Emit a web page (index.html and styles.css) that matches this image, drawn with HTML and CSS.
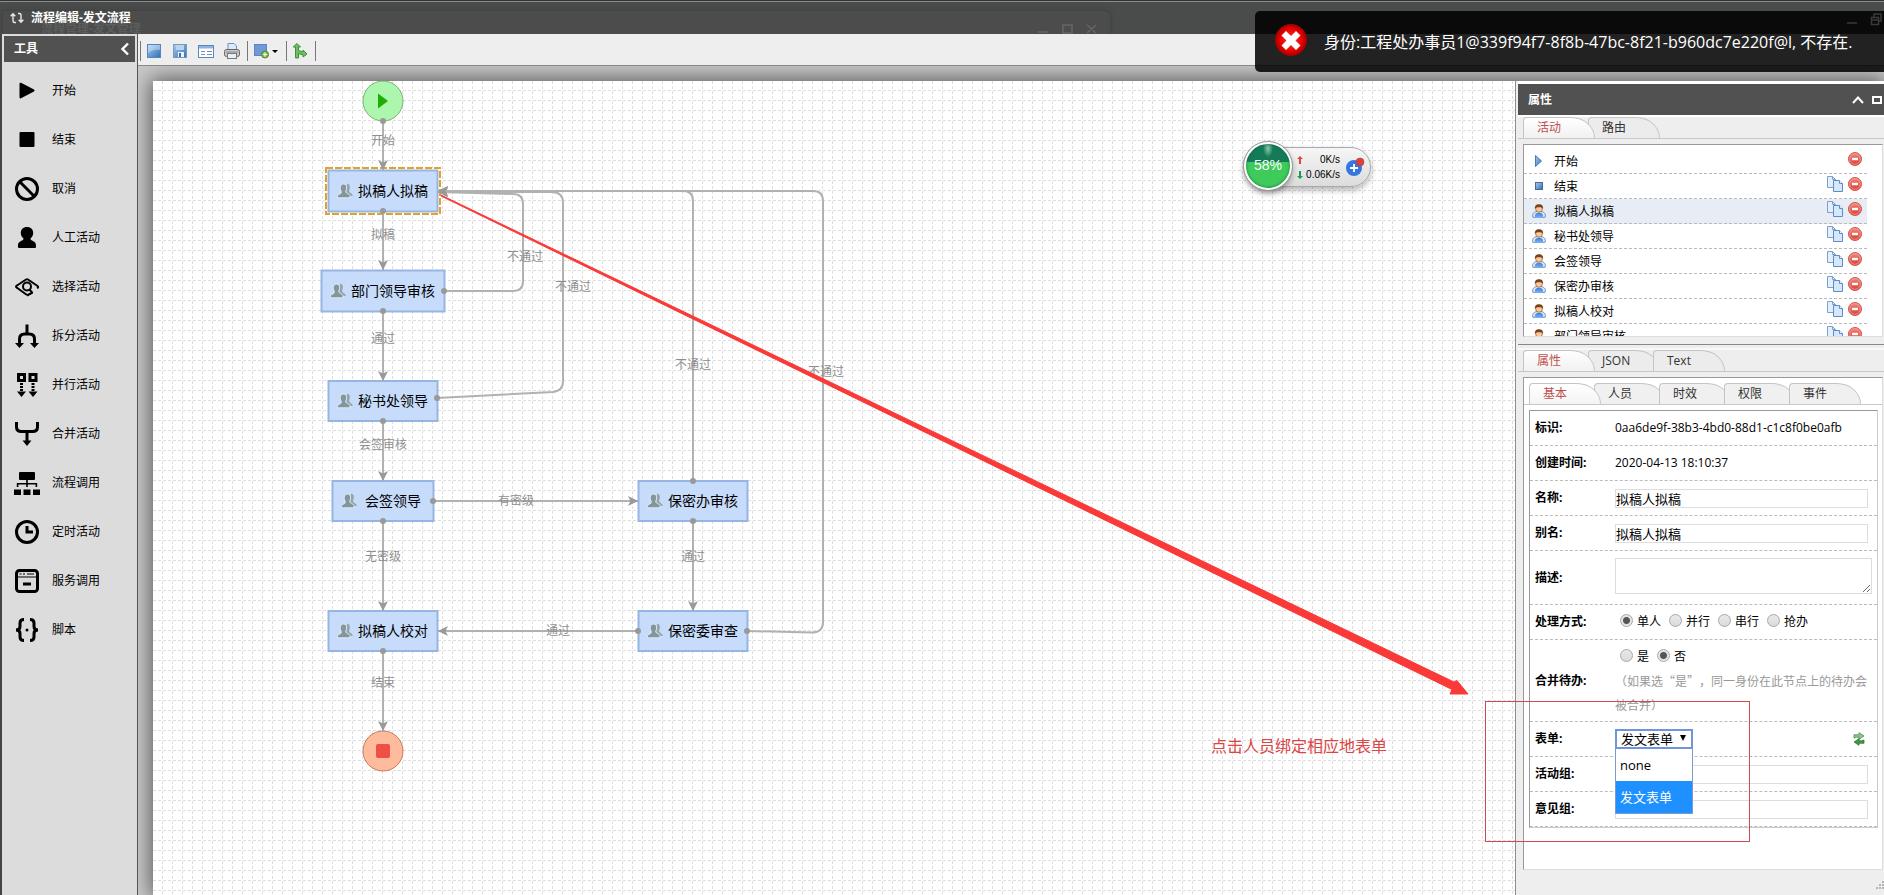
FILE: index.html
```
<!DOCTYPE html>
<html lang="zh-CN">
<head>
<meta charset="utf-8">
<title>流程编辑-发文流程</title>
<link rel="stylesheet" href="styles.css">
</head>
<body>
<svg class="sprite" aria-hidden="true">
  <defs>
    <linearGradient id="gBlue" x1="0" y1="0" x2="1" y2="1"><stop offset="0" stop-color="#a9cdf2"/><stop offset="1" stop-color="#2f6fb5"/></linearGradient>
    <linearGradient id="gRed" x1="0" y1="0" x2="0" y2="1"><stop offset="0" stop-color="#f08a80"/><stop offset="1" stop-color="#d93a32"/></linearGradient>
    <linearGradient id="gUser" x1="0" y1="0" x2="0" y2="1"><stop offset="0" stop-color="#3f7fd6"/><stop offset="1" stop-color="#6fb4ff"/></linearGradient>
    <radialGradient id="gErr"><stop offset="0" stop-color="#ff3a30"/><stop offset="0.7" stop-color="#e80000"/><stop offset="1" stop-color="#a00000"/></radialGradient>
  </defs>
  <symbol id="i-copy" viewBox="0 0 16 16"><path d="M.5.5h5l3 3v8h-8z" fill="#e3effc" stroke="#7aa0cf"/><path d="M5.5.5v3h3" fill="none" stroke="#7aa0cf"/><path d="M6.500 4.500h6l3 3v8h-9z" fill="#d5e7fb" stroke="#5f8cc4"/><path d="M12.500 4.500v3h3" fill="#fff" stroke="#5f8cc4"/></symbol>
  <symbol id="i-del" viewBox="0 0 14 14"><circle cx="7" cy="7" r="6.500" fill="url(#gRed)" stroke="#d0554d"/><circle cx="7" cy="7" r="5.300" fill="none" stroke="#f5aaa4" stroke-width=".7"/><rect x="4" y="5.800" width="6" height="2.400" fill="#fff"/></symbol>
  <symbol id="i-user" viewBox="0 0 14 14"><path d="M.8 13.200C0 9.500 2 8 5 7.500h4c3 .5 5 2 4.200 5.700-3 .8-9.400.8-12.400 0z" fill="#dfe8f2" stroke="#5d7fae" stroke-width=".8"/><path d="M3 13.300c-.6-3 1-4.600 4-4.600s4.600 1.600 4 4.600c-2 .5-6 .5-8 0z" fill="url(#gUser)"/><circle cx="7" cy="4.800" r="3.400" fill="#f7c9a0" stroke="#a8622c" stroke-width=".8"/><path d="M2.900 5C2.500 1.500 4.500.3 7 .3s4.500 1.200 4.100 4.700C10 3.200 8.500 3.300 7 3.300S4 3.200 2.900 5z" fill="#7a4218"/></symbol>
  <symbol id="i-group" viewBox="0 0 16 16"><path d="M10 .8c2.200 0 3.200 1.700 2.800 4.200-.2 1.600-.9 2.500-.7 3.600.3 1.300 3.400 1.700 3.700 4.400H9z" fill="#93a5aa"/><path d="M6.500 1c2.400 0 3.400 1.800 3.100 4.200-.2 1.700-.9 2.600-.9 3.600 0 1.500 3.600 1.700 4.300 3.700v2.300H.4v-2.100c1.200-1.600 4-2 4-3.500 0-1-1-2-1.200-3.600C2.900 3.100 4.300 1 6.500 1z" fill="#84969c" stroke="#eef5fc" stroke-width=".8"/></symbol>
</svg>

<header class="titlebar">
  <svg class="titlebar-icon" viewBox="0 0 14 12" width="14" height="12" aria-hidden="true"><path d="M6 10.500H4.500q-1.500 0-1.500-1.500V2M.7 4.300 3 1.700l2.300 2.600M8 1.500h1.500q1.500 0 1.500 1.500v7M8.700 7.700 11 10.300l2.300-2.600" fill="none" stroke="#e8e8e8" stroke-width="1.400"/></svg>
  <h1 class="titlebar-text">流程编辑-发文流程</h1>
  <div class="ghost-window" aria-hidden="true">
    <span class="ghost-text">流程管理-发文管理</span>
    <svg viewBox="0 0 60 12" width="60" height="12"><path d="M0 9h10M25 2h9v8h-9zM49 2l9 8M58 2l-9 8" fill="none" stroke="#656666" stroke-width="1.500"/></svg>
  </div>
</header>

<div class="layout">
  <aside class="tools">
    <div class="tools-head"><h2 class="head-text">工具</h2>
      <button class="icon-btn" aria-label="收起"><svg viewBox="0 0 10 14" width="10" height="14"><path d="M8 1.500 2.500 7 8 12.500" fill="none" stroke="#fff" stroke-width="2.400"/></svg></button>
    </div>
    <ul class="tool-list">
      <li class="tool"><svg class="tool-icon" viewBox="0 0 24 24"><path d="M4.500 5q0-1.800 1.500-1.200L19 10.500q1.200 1 0 2L6 19.200Q4.500 20 4.500 18z"/></svg>开始</li>
      <li class="tool"><svg class="tool-icon" viewBox="0 0 24 24"><rect x="4.500" y="4" width="15" height="15" rx="1"/></svg>结束</li>
      <li class="tool"><svg class="tool-icon line" viewBox="0 0 24 24"><circle cx="12" cy="12" r="10.500"/><path d="M4.800 4.800 19.200 19.200"/></svg>取消</li>
      <li class="tool"><svg class="tool-icon" viewBox="0 0 24 24"><path d="M12 1c4 0 6.200 2.600 6.200 6 0 2.300-1 4-2.500 5.300-.8 1 .3 1.700 1.800 2.500 2.500 1.200 3.700 2.200 3.500 6.500q0 .7-1 .7H4q-1 0-1-.7c-.2-4.300 1-5.300 3.500-6.500 1.500-.8 2.600-1.500 1.800-2.500C6.800 11 5.800 9.300 5.800 7c0-3.400 2.200-6 6.200-6z"/></svg>人工活动</li>
      <li class="tool"><svg class="tool-icon thin" viewBox="0 0 24 24"><path d="M12 20 2 12.800q-2-1.200 0-2.300L11 4.500q1-.7 2 0l9.500 6.500q1.500 1.300-.5 2.200"/><path d="M17.500 17.500 12 20.500"/><circle cx="12" cy="11.500" r="4"/><path d="m14.500 14.500 3 3.500"/></svg>选择活动</li>
      <li class="tool"><svg class="tool-icon line" viewBox="0 0 24 24"><path d="M12 .5v9M4.500 19v-4q0-5 5-5h5q5 0 5 5v4"/><path class="solid" d="M0 19h9l-4.500 5zM15 19h9l-4.500 5z"/></svg>拆分活动</li>
      <li class="tool"><svg class="tool-icon line" viewBox="0 0 24 24"><rect x="3.500" y="1.500" width="6" height="6"/><rect x="15" y="1.500" width="6" height="6"/><path class="dots" d="M6.500 10v8M18 10v8"/><path class="solid" d="M2 18.500h9L6.500 24zM13.500 18.500h9L18 24z"/></svg>并行活动</li>
      <li class="tool"><svg class="tool-icon line" viewBox="0 0 24 24"><path d="M1.500 0v5q0 4.500 5 4.500h11q5 0 5-4.500V0M12 9.500V20"/><path class="solid" d="M7.500 18.500h9L12 24z"/></svg>合并活动</li>
      <li class="tool"><svg class="tool-icon" viewBox="0 0 24 24"><path d="M5 1h14q1 0 1 1v6q0 1-1 1H5q-1 0-1-1V2q0-1 1-1zM11.200 9h1.600v3h9.400v4h-1.600v-2.500h-7.800V16h-1.600v-2.500H3.400V16H1.800v-4h9.400zM-1 18.500h7V24h-7zM8.500 18.500h7V24h-7zM18 18.500h7V24h-7z"/></svg>流程调用</li>
      <li class="tool"><svg class="tool-icon line" viewBox="0 0 24 24"><circle cx="12" cy="12" r="10.500"/><path d="M12 6v6h6"/></svg>定时活动</li>
      <li class="tool"><svg class="tool-icon line" viewBox="0 0 24 24"><rect x="1.500" y="1.500" width="21" height="21" rx="3"/><path class="fine" d="M2 8h20M4.500 5h2M8 5h2M12 5h7"/><path d="M8 15h8"/></svg>服务调用</li>
      <li class="tool"><svg class="tool-icon line" viewBox="0 0 24 24"><path d="M9 1.500Q5 1.500 5 5v3.500Q5 12 1 12q4 0 4 3.500V19q0 3.500 4 3.500M15 1.500q4 0 4 3.500v3.500q0 3.500 4 3.500-4 0-4 3.500V19q0 3.500-4 3.500"/><circle class="solid" cx="12" cy="12" r="1.500"/></svg>脚本</li>
    </ul>
  </aside>

  <main class="editor">
    <div class="toolbar">
      <i class="sep"></i>
      <button class="icon-btn" aria-label="新建"><svg viewBox="0 0 16 16" width="16" height="16"><rect x="1.500" y="1.500" width="13" height="13" fill="url(#gBlue)" stroke="#5486bb"/><path d="M2 2h12v5q-7-1-12 3z" fill="#fff" opacity=".35"/></svg></button>
      <button class="icon-btn" aria-label="保存"><svg viewBox="0 0 16 16" width="16" height="16"><rect x="1.500" y="1.500" width="13" height="13" fill="url(#gBlue)" stroke="#7a98b8"/><rect x="4" y="2" width="8" height="5" fill="#b9d3ee"/><rect x="6" y="9" width="6" height="5" fill="#eef5fc"/><rect x="7" y="10" width="2" height="4" fill="#3c6ea8"/></svg></button>
      <button class="icon-btn" aria-label="表单"><svg viewBox="0 0 16 16" width="16" height="16"><rect x=".5" y="2.500" width="15" height="12" fill="#fff" stroke="#5d86b8"/><rect x="1" y="3" width="14" height="2.500" fill="#8db3e2"/><path d="M3 8.500h4M3 11.500h4M9 8.500h5M9 11.500h5" stroke="#6f90ba"/></svg></button>
      <button class="icon-btn" aria-label="打印"><svg viewBox="0 0 16 16" width="16" height="16"><path d="M4 7V.5h6L12.500 3v4z" fill="#dceafb" stroke="#6e8fc0"/><rect x=".5" y="6.500" width="15" height="7" rx="2" fill="#c9c9c9" stroke="#666"/><rect x="3.500" y="10.500" width="9" height="5" fill="#e6effa" stroke="#777"/><path d="M2 9h12" stroke="#888"/></svg></button>
      <i class="sep"></i>
      <button class="icon-btn" aria-label="添加"><svg viewBox="0 0 26 16" width="26" height="16"><rect x="1.500" y="1.500" width="12" height="11" fill="#7099d8" stroke="#5c86c8"/><circle cx="12" cy="11.500" r="3.500" fill="#7fb84a" stroke="#4f8a2a"/><path d="M12 9.500v4M10 11.500h4" stroke="#fff" stroke-width="1.200"/><path d="M19 7h6l-3 3z"/></svg></button>
      <i class="sep"></i>
      <button class="icon-btn" aria-label="路由"><svg viewBox="0 0 16 16" width="16" height="16"><path d="M3.500 15V4H1.200L5 .5 8.500 4h-2v3.500L11 9V7l4 4-4 3v-2L6.500 10.500V15z" fill="#6cc063" stroke="#3d9137"/></svg></button>
      <i class="sep"></i>
    </div>

    <div class="workspace">
      <div class="board">
        <svg class="paper" role="img" aria-label="流程图">
          <defs>
            <pattern id="grid" width="10" height="10" patternUnits="userSpaceOnUse"><path d="M0 9.500h10M9.500 0v10" fill="none" stroke="#dedede" stroke-dasharray="3 2"/></pattern>
            <marker id="arrow" markerUnits="userSpaceOnUse" markerWidth="12" markerHeight="10" refX="10" refY="5" orient="auto"><path d="M0 0 10 5 0 10 2.500 5z" fill="#999"/></marker>
            <marker id="dot" markerUnits="userSpaceOnUse" markerWidth="6" markerHeight="6" refX="3" refY="3"><circle cx="3" cy="3" r="3" fill="#999"/></marker>
          </defs>
          <rect width="100%" height="100%" fill="#fff"/>
          <rect width="100%" height="100%" fill="url(#grid)"/>
          <g transform="translate(-153 -81)">
            <g class="node">
              <circle class="start" cx="383" cy="101" r="20"/>
              <circle class="end" cx="383" cy="751" r="20"/>
              <rect class="selected" x="326" y="168" width="114" height="46"/>
              <rect x="328.500" y="170.500" width="109" height="41"/>
              <rect x="321.500" y="270.500" width="123" height="41"/>
              <rect x="328.500" y="381" width="109" height="40"/>
              <rect x="332.500" y="481" width="101" height="40"/>
              <rect x="328.500" y="611" width="109" height="40"/>
              <rect x="638.500" y="481" width="109" height="40"/>
              <rect x="638.500" y="611" width="109" height="40"/>
            </g>
            <path d="M378 93.500v15l10-7.500z" fill="#1cae00"/>
            <rect x="376" y="744" width="14" height="14" rx="2" fill="#ee5046"/>
            <use href="#i-group" x="337" y="183" width="16" height="16"/><use href="#i-group" x="330" y="283" width="16" height="16"/>
            <use href="#i-group" x="337" y="393" width="16" height="16"/><use href="#i-group" x="341" y="493" width="16" height="16"/>
            <use href="#i-group" x="337" y="623" width="16" height="16"/><use href="#i-group" x="647" y="493" width="16" height="16"/>
            <use href="#i-group" x="647" y="623" width="16" height="16"/>
            <g class="edges">
              <path d="M383 121V170"/><path d="M383 211V270"/><path d="M383 311V381"/><path d="M383 421V481"/><path d="M383 521V611"/><path d="M383 651V731"/>
              <path d="M433 501H638"/><path d="M693 521V611"/><path d="M638 631H438"/>
              <path d="M444 291H513Q523 291 523 281V204Q523 194 513 194L438 192"/>
              <path d="M437 398 553 392Q563 391 563 381V203Q563 192 552 192H438"/>
              <path d="M693 481V201Q693 191 683 191H438"/>
              <path d="M747 631 813 632.500Q823 632 823 622V201Q823 191 813 191H438"/>
            </g>
            <g class="node-text">
              <text x="358" y="196">拟稿人拟稿</text><text x="351" y="296">部门领导审核</text><text x="358" y="406">秘书处领导</text><text x="365" y="506">会签领导</text><text x="358" y="636">拟稿人校对</text><text x="668" y="506">保密办审核</text><text x="668" y="636">保密委审查</text>
            </g>
            <g class="edge-text">
              <text x="383" y="145">开始</text><text x="383" y="239">拟稿</text><text x="383" y="343">通过</text><text x="383" y="449">会签审核</text><text x="383" y="561">无密级</text><text x="383" y="687">结束</text>
              <text x="516" y="505">有密级</text><text x="693" y="561">通过</text><text x="558" y="635">通过</text>
              <text x="525" y="261">不通过</text><text x="573" y="291">不通过</text><text x="693" y="369">不通过</text><text x="826" y="376">不通过</text>
            </g>
          </g>
        </svg>

        <section class="props">
          <div class="props-head"><h2 class="head-text">属性</h2>
            <button class="icon-btn" aria-label="折叠"><svg viewBox="0 0 12 8" width="12" height="8"><path d="M1 7 6 1.500 11 7" fill="none" stroke="#fff" stroke-width="2"/></svg></button>
            <button class="icon-btn" aria-label="最大化"><svg viewBox="0 0 10 8" width="10" height="8"><rect x="1" y="1" width="8" height="6" fill="none" stroke="#fff" stroke-width="2"/></svg></button>
          </div>
          <div class="tabs"><button class="tab active">活动</button><button class="tab">路由</button></div>
          <ul class="box act-list">
            <li class="act"><svg class="act-icon" viewBox="0 0 14 14"><path d="M3.500 1.500v11L9.500 7z" fill="url(#gBlue)" stroke="#4a7ab5"/></svg><span class="act-name">开始</span><svg class="del"><use href="#i-del"/></svg></li>
            <li class="act"><svg class="act-icon" viewBox="0 0 14 14"><rect x="3.500" y="3.500" width="7" height="7" fill="url(#gBlue)" stroke="#4a6a92"/></svg><span class="act-name">结束</span><svg class="copy"><use href="#i-copy"/></svg><svg class="del"><use href="#i-del"/></svg></li>
            <li class="act current"><svg class="act-icon"><use href="#i-user"/></svg><span class="act-name">拟稿人拟稿</span><svg class="copy"><use href="#i-copy"/></svg><svg class="del"><use href="#i-del"/></svg></li>
            <li class="act"><svg class="act-icon"><use href="#i-user"/></svg><span class="act-name">秘书处领导</span><svg class="copy"><use href="#i-copy"/></svg><svg class="del"><use href="#i-del"/></svg></li>
            <li class="act"><svg class="act-icon"><use href="#i-user"/></svg><span class="act-name">会签领导</span><svg class="copy"><use href="#i-copy"/></svg><svg class="del"><use href="#i-del"/></svg></li>
            <li class="act"><svg class="act-icon"><use href="#i-user"/></svg><span class="act-name">保密办审核</span><svg class="copy"><use href="#i-copy"/></svg><svg class="del"><use href="#i-del"/></svg></li>
            <li class="act"><svg class="act-icon"><use href="#i-user"/></svg><span class="act-name">拟稿人校对</span><svg class="copy"><use href="#i-copy"/></svg><svg class="del"><use href="#i-del"/></svg></li>
            <li class="act"><svg class="act-icon"><use href="#i-user"/></svg><span class="act-name">部门领导审核</span><svg class="copy"><use href="#i-copy"/></svg><svg class="del"><use href="#i-del"/></svg></li>
          </ul>
          <div class="splitter"></div>
          <div class="tabs"><button class="tab active">属性</button><button class="tab">JSON</button><button class="tab">Text</button></div>
          <div class="box detail">
            <div class="tabs inner"><button class="tab active">基本</button><button class="tab">人员</button><button class="tab">时效</button><button class="tab">权限</button><button class="tab">事件</button></div>
            <form class="form">
              <div class="row"><span class="label">标识:</span><span class="value">0aa6de9f-38b3-4bd0-88d1-c1c8f0be0afb</span></div>
              <div class="row"><span class="label">创建时间:</span><span class="value">2020-04-13 18:10:37</span></div>
              <div class="row"><label class="label" for="f-name">名称:</label><input class="text" id="f-name" type="text" value="拟稿人拟稿"></div>
              <div class="row"><label class="label" for="f-alias">别名:</label><input class="text" id="f-alias" type="text" value="拟稿人拟稿"></div>
              <div class="row tall"><label class="label" for="f-desc">描述:</label><textarea class="area" id="f-desc"></textarea></div>
              <div class="row"><span class="label">处理方式:</span>
                <div class="radios" role="radiogroup" aria-label="处理方式">
                  <label class="opt"><input type="radio" name="mode" checked>单人</label><label class="opt"><input type="radio" name="mode">并行</label><label class="opt"><input type="radio" name="mode">串行</label><label class="opt"><input type="radio" name="mode">抢办</label>
                </div></div>
              <div class="row merge"><span class="label">合并待办:</span>
                <div class="value">
                  <div class="radios" role="radiogroup" aria-label="合并待办"><label class="opt"><input type="radio" name="merge">是</label><label class="opt"><input type="radio" name="merge" checked>否</label></div>
                  <p class="note">（如果选“是”，同一身份在此节点上的待办会被合并）</p>
                </div></div>
              <div class="row"><label class="label" for="f-form">表单:</label>
                <div class="picker">
                  <select class="select" id="f-form"><option>none</option><option selected>发文表单</option></select>
                  <svg class="select-arrow" viewBox="0 0 6 6" width="6" height="6"><path d="M0 0h6L3 6z"/></svg>
                  <ul class="options"><li class="option">none</li><li class="option chosen">发文表单</li></ul>
                </div>
                <button class="icon-btn refresh" type="button" aria-label="刷新"><svg viewBox="0 0 14 14" width="14" height="14"><path d="M2 6V2.800h5V.7L12 4 7 7.300V5.200H4.500z" fill="#8cc98a" stroke="#4d8b4f" stroke-width=".8"/><path d="M12 8v3.200H7v2.100L2 10l5-3.300v2.100h2.500z" fill="#3f9a45" stroke="#2f7535" stroke-width=".8"/></svg></button>
              </div>
              <div class="row"><label class="label" for="f-group">活动组:</label><input class="text" id="f-group" type="text"></div>
              <div class="row"><label class="label" for="f-opinion">意见组:</label><input class="text" id="f-opinion" type="text"></div>
            </form>
          </div>
          <svg class="grip" viewBox="0 0 8 8" width="8" height="8" aria-hidden="true"><path d="M6 0h2v2H6zM3 3h2v2H3zM6 3h2v2H6zM0 6h2v2H0zM3 6h2v2H3zM6 6h2v2H6z" fill="#b5b5b5"/></svg>
        </section>
      </div>
    </div>
  </main>
</div>

<div class="monitor">
  <span class="gauge">58%</span>
  <div class="rates"><span class="rate"><svg viewBox="0 0 6 8" width="6" height="8"><path d="M3 0 6 3H4v5H2V3H0z" fill="#e2453a"/></svg>0K/s</span><span class="rate"><svg viewBox="0 0 6 8" width="6" height="8"><path d="M3 8 0 5h2V0h2v5h2z" fill="#1f9a55"/></svg>0.06K/s</span></div>
  <svg class="boost" viewBox="0 0 20 20" width="20" height="20" aria-hidden="true"><circle cx="9" cy="11" r="8" fill="#3478de"/><path d="M9 7v8M5 11h8" stroke="#fff" stroke-width="1.800"/><circle cx="15" cy="5" r="4" fill="#e04038" stroke="#8a4a5a" stroke-width=".6"/></svg>
</div>

<svg class="annotations" aria-hidden="true">
  <path d="M441 195 1454 682 1457 680.500 1468 694 1450 694 1452 689.500 441 196z" fill="#fa3a38" stroke="#fa3a38"/>
  <rect x="1485.500" y="701.500" width="264" height="140" fill="none" stroke="#cc4a50"/>
  <text class="annotation-text" x="1211" y="752">点击人员绑定相应地表单</text>
</svg>

<div class="toast" role="alert">
  <svg viewBox="0 0 32 32" width="32" height="32" aria-hidden="true"><circle cx="16" cy="16" r="16" fill="url(#gErr)"/><path d="M11 7 16 12l5-5 4.500 4.500-5 5 5 5L21 26l-5-5-5 5-4.500-4.500 5-5-5-5z" fill="#fff"/></svg>
  <p class="toast-text">身份:工程处办事员1@339f94f7-8f8b-47bc-8f21-b960dc7e220f@l, 不存在.</p>
  <svg class="toast-win" viewBox="0 0 36 14" width="36" height="14" aria-hidden="true"><path d="M1 11h10M25.500 5.500h7v7h-7zM28 5V2h7v7h-2M26 8h6" fill="none" stroke="#3a3a3a" stroke-width="1.500"/></svg>
</div>
</body>
</html>
```

FILE: styles.css
```
* { box-sizing: border-box; margin: 0; padding: 0; }
html, body { height: 100%; }
body {
  display: flex;
  flex-direction: column;
  position: relative;
  overflow: hidden;
  background: #444546;
  color: #000;
  font: 12px/24px "Open Sans", "Noto Sans CJK SC", sans-serif;
}
ul { list-style: none; }
button, input, select, textarea { font: inherit; color: inherit; }
.sprite { position: absolute; width: 0; height: 0; }
.icon-btn { display: flex; border: 0; background: none; }
.head-text { flex: 1; font-size: 12px; line-height: 24px; color: #fff; }

/* window title */
.titlebar {
  display: flex;
  align-items: center;
  gap: 7px;
  position: relative;
  flex: none;
  height: 34px;
  padding: 0 0 0 10px;
  border-top: 1px solid #333;
  background: #4a4b4b;
  box-shadow: inset 0 1px #8a8b8d;
}
.titlebar-icon { position: relative; z-index: 1; }
.titlebar-text { position: relative; z-index: 1; font-size: 12px; line-height: 20px; color: #fff; }
.ghost-window {
  display: flex;
  justify-content: space-between;
  align-items: center;
  position: absolute;
  left: 3px;
  top: 10px;
  width: 1107px;
  height: 23px;
  padding: 12px 12px 0 38px;
  border-top-right-radius: 6px;
  background: #4b4c4b;
  box-shadow: 0 0 5px #3c3d3d;
}
.ghost-text { font-weight: bold; line-height: 12px; color: #5c5d5d; }

.layout { display: flex; position: relative; flex: 1; min-height: 0; padding-left: 2px; background: #444546; }

/* tool palette */
.tools {
  flex: none;
  width: 136px;
  padding: 2px 2px 0;
  border-right: 1px solid #555;
  background: #dcdcdc;
}
.tools-head { display: flex; align-items: center; height: 26px; padding: 0 5px 0 10px; background: #515151; }
.tool-list { padding-top: 4px; }
.tool { display: flex; align-items: center; gap: 13px; height: 49px; padding-left: 11px; }
.tool-icon { width: 24px; height: 24px; overflow: visible; }
.line { fill: none; stroke: #000; stroke-width: 3; }
.thin { fill: none; stroke: #000; stroke-width: 2; }
.line .solid { fill: #000; stroke: none; }
.line .dots { stroke-dasharray: 2 1; }
.line .fine { stroke-width: 1; }

/* toolbar */
.editor { display: flex; flex: 1; flex-direction: column; min-width: 0; }
.toolbar {
  display: flex;
  align-items: center;
  gap: 10px;
  flex: none;
  height: 32px;
  padding: 3px 2px 0;
  border-bottom: 1px solid #888;
  background: #eee;
}
.sep { width: 1px; height: 20px; margin-right: -5px; background: #777; }
.icon-btn + .sep { margin-left: -3px; }

/* canvas */
.workspace { display: flex; flex: 1; min-height: 0; padding: 15px 0 0 15px; background: #c9c9c9; overflow: hidden; }
.board { display: flex; flex: 1; min-width: 0; box-shadow: 0 0 20px 2px #555; }
.paper { flex: 1; min-width: 0; height: 100%; background: #fff; }
.node rect, .node circle { fill: #c6dcfa; stroke: #97b5e2; stroke-width: 2; }
.node .start { fill: #adf6ad; stroke: #79b379; stroke-width: 1; }
.node .end { fill: #ffbc9c; stroke: #c87a5c; stroke-width: 1; }
.node .selected { fill: #fff; stroke: #dfa22a; stroke-dasharray: 7 2; }
.edges path { fill: none; stroke: #b1b1b1; stroke-width: 2; marker-start: url(#dot); marker-end: url(#arrow); }
.node-text { font-size: 14px; }
.edge-text { fill: #8f8f8f; text-anchor: middle; }

/* property panel */
.props {
  display: flex;
  flex-direction: column;
  position: relative;
  flex: none;
  width: 369px;
  padding-left: 2px;
  border-left: 1px solid #8d8d8d;
  background: #eee;
}
.props-head {
  display: flex;
  align-items: center;
  gap: 8px;
  flex: none;
  height: 36px;
  padding: 0 2px 0 10px;
  border-top: 3px solid #fff;
  border-bottom: 2px solid #fff;
  background: #515151;
}
.tabs { display: flex; flex: none; height: 22px; padding-left: 5px; border-bottom: 1px solid #c8c8c8; }
.tab {
  position: relative;
  flex: none;
  width: 72px;
  height: 21px;
  margin-right: -7px;
  padding-left: 13px;
  border: 1px solid #c4c4c4;
  border-bottom: 0;
  border-radius: 4px 24px 0 0 / 4px 21px 0 0;
  background: #ececec;
  color: #333;
  text-align: left;
  line-height: 20px;
}
.tab.active { z-index: 1; background: linear-gradient(#fff, #f1f1f1); color: #c0504d; }
.box {
  margin: 5px 1px 0 5px;
  border: 1px solid #ddd;
  border-top-color: #999;
  border-left-color: #999;
  background: #fff;
}
.act-list { flex: none; height: 193px; padding: 4px 15px 0 0; overflow: hidden; }
.act { display: flex; align-items: center; height: 25px; padding: 0 5px 0 8px; border-bottom: 1px dashed #bbb; }
.act.current { background: #e8ecf4; }
.act-icon { width: 14px; height: 14px; }
.act-name { flex: 1; padding: 2px 0 0 8px; }
.copy { width: 16px; height: 16px; margin: 0 5px 4px 0; }
.del { width: 14px; height: 14px; margin-bottom: 4px; }
.splitter { flex: none; height: 6px; margin: 7px 0 0; border-top: 1px solid #888; border-bottom: 2px solid #f8f8f8; }
.detail { flex: 1; margin-bottom: 25px; padding-top: 5px; }
.detail .tab { background: #f0f0f0; }
.detail .tab.active { background: linear-gradient(#fff, #f4f4f4); }
.form { margin: 5px 4px 0 5px; border: 1px solid #ccc; border-top-color: #999; border-left-color: #999; }
.row { display: flex; align-items: center; min-height: 35px; padding-left: 5px; border-bottom: 1px dashed #bbb; }
.label { flex: none; width: 80px; font-weight: bold; }
.value { flex: 1; }
.text { flex: 1; min-width: 0; height: 19px; margin-right: 9px; border: 1px solid #ddd; font-size: 13px; line-height: 17px; }
.tall { height: 54px; }
.area { flex: 1; height: 36px; margin: 0 5px 3px 0; border: 1px solid #ddd; resize: vertical; }
.radios { display: flex; gap: 5px; padding-left: 5px; }
.opt { display: flex; align-items: center; gap: 4px; }
.opt input {
  appearance: none;
  width: 13px;
  height: 13px;
  margin-bottom: 4px;
  border: 1px solid #a8a8a8;
  border-radius: 50%;
  background: linear-gradient(#e9e9e9, #dadada);
}
.opt + .opt { margin-left: 3px; }
.opt input:checked { background: radial-gradient(circle, #555 3px, #e4e4e4 4px); }
.merge { padding: 5px 0 4px 5px; }
.note { font-family: "Noto Sans CJK SC", sans-serif; text-spacing-trim: space-all; color: #999; }
.picker { position: relative; width: 78px; }
.select {
  appearance: none;
  display: block;
  width: 100%;
  height: 20px;
  padding-left: 4px;
  border: 2px solid #6f95dd;
  background: #fff;
  font-size: 13px;
  line-height: 16px;
}
.select-arrow { position: absolute; right: 7px; top: 6px; }
.options {
  position: absolute;
  z-index: 2;
  left: 0;
  top: 100%;
  width: 100%;
  border: 1px solid #7a9ad0;
  border-top: 0;
  background: #fff;
  font-size: 13px;
  line-height: 32px;
}
.option { padding-left: 4px; }
.option.chosen { background: #1e90ff; color: #fff; }
.refresh { margin: 0 11px 0 auto; }
.grip { position: absolute; right: 0; bottom: 6px; }

/* network gadget */
.monitor {
  display: flex;
  align-items: center;
  justify-content: space-between;
  position: absolute;
  left: 1248px;
  top: 147px;
  width: 123px;
  height: 40px;
  padding-right: 5px;
  border: 1px solid #aaa;
  border-radius: 20px;
  background: linear-gradient(#f6f6f6, #dcdcdc);
  box-shadow: 0 3px 6px rgba(0, 0, 0, .3);
}
.gauge {
  flex: none;
  width: 48px;
  height: 48px;
  margin: 0 0 2px -5px;
  border: 2px solid #fff;
  border-radius: 50%;
  outline: 1px solid #999;
  background: radial-gradient(ellipse at 50% 10%, #8cc8ac 0, transparent 16%), linear-gradient(#157a58 42%, #3fca5c 42%);
  box-shadow: inset 0 0 3px #0a6a40, 0 3px 6px rgba(0, 0, 0, .4);
  color: #fff;
  font: 14px/42px "Liberation Sans", sans-serif;
  text-align: center;
}
.rates { flex: 1; padding: 0 5px 0 5px; font: 10px/15px "Liberation Sans", sans-serif; }
.rate { display: flex; align-items: center; justify-content: space-between; }

.annotations { position: absolute; inset: 0; width: 100%; height: 100%; pointer-events: none; }
.annotation-text { font-size: 16px; fill: #dd4444; }

/* error message */
.toast {
  display: flex;
  align-items: center;
  gap: 17px;
  position: absolute;
  right: 0;
  top: 11px;
  width: 629px;
  height: 61px;
  padding: 0 0 4px 20px;
  border-radius: 5px 0 0 5px;
  background: rgba(0, 0, 0, .86);
}
.toast-text { padding-top: 4px; color: #fff; font-size: 16px; white-space: nowrap; }
.toast-win { position: absolute; right: 2px; top: 1px; }
```
